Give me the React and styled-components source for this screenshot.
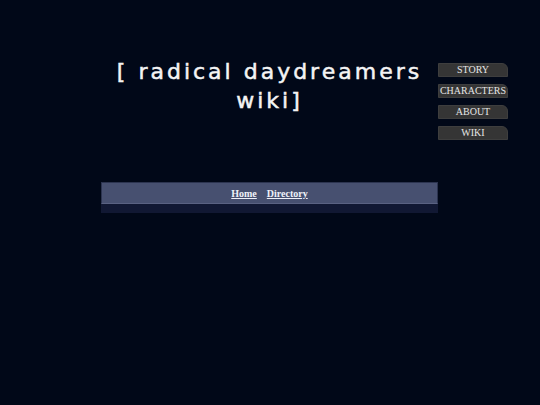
import React from "react";
import styled, { createGlobalStyle } from "styled-components";

const Global = createGlobalStyle`
  html, body { margin: 0; padding: 0; background: #010818; }
  body { width: 540px; height: 405px; overflow: hidden; }
`;

const Page = styled.div`
  display: flex;
  align-items: flex-start;
  padding-left: 101px;
  padding-top: 57px;
`;

const Main = styled.div`
  width: 337px;
  display: flex;
  flex-direction: column;
`;

const Title = styled.h1`
  margin: 0;
  padding: 0;
  font-family: "DejaVu Sans", sans-serif;
  font-weight: normal;
  font-size: 22px;
  line-height: 29px;
  letter-spacing: 3px;
  color: #f4f4f4;
  text-align: center;
  -webkit-text-stroke: 0.5px #f4f4f4;
`;

const Bar = styled.div`
  margin-top: 67px;
  display: flex;
  flex-direction: column;
`;

const LinkRow = styled.div`
  height: 20px;
  background: #475070;
  border: 1px solid #2c3450;
  border-bottom-color: #5a6282;
  display: flex;
  align-items: center;
  justify-content: center;
  gap: 10px;
`;

const BarLink = styled.a`
  font-family: "Liberation Serif", serif;
  font-weight: bold;
  font-size: 10px;
  color: #eef0f8;
  text-decoration: underline;
  cursor: pointer;
`;

const BarFoot = styled.div`
  height: 9px;
  background: #111833;
`;

const Nav = styled.nav`
  display: flex;
  flex-direction: column;
  gap: 7px;
  margin-top: 6px;
`;

const NavButton = styled.a`
  width: 70px;
  height: 14px;
  box-sizing: border-box;
  background: #353535;
  border: 1px solid #3e3e3e;
  border-top-right-radius: 6px;
  color: #e6e6e6;
  font-family: "Liberation Serif", serif;
  font-size: 10px;
  line-height: 12px;
  text-align: center;
  white-space: nowrap;
  cursor: pointer;
`;

export default function App() {
  return (
    <>
      <Global />
      <Page>
        <Main>
          <Title>[ radical daydreamers wiki]</Title>
          <Bar>
            <LinkRow>
              <BarLink>Home</BarLink>
              <BarLink>Directory</BarLink>
            </LinkRow>
            <BarFoot />
          </Bar>
        </Main>
        <Nav>
          <NavButton>STORY</NavButton>
          <NavButton>CHARACTERS</NavButton>
          <NavButton>ABOUT</NavButton>
          <NavButton>WIKI</NavButton>
        </Nav>
      </Page>
    </>
  );
}
